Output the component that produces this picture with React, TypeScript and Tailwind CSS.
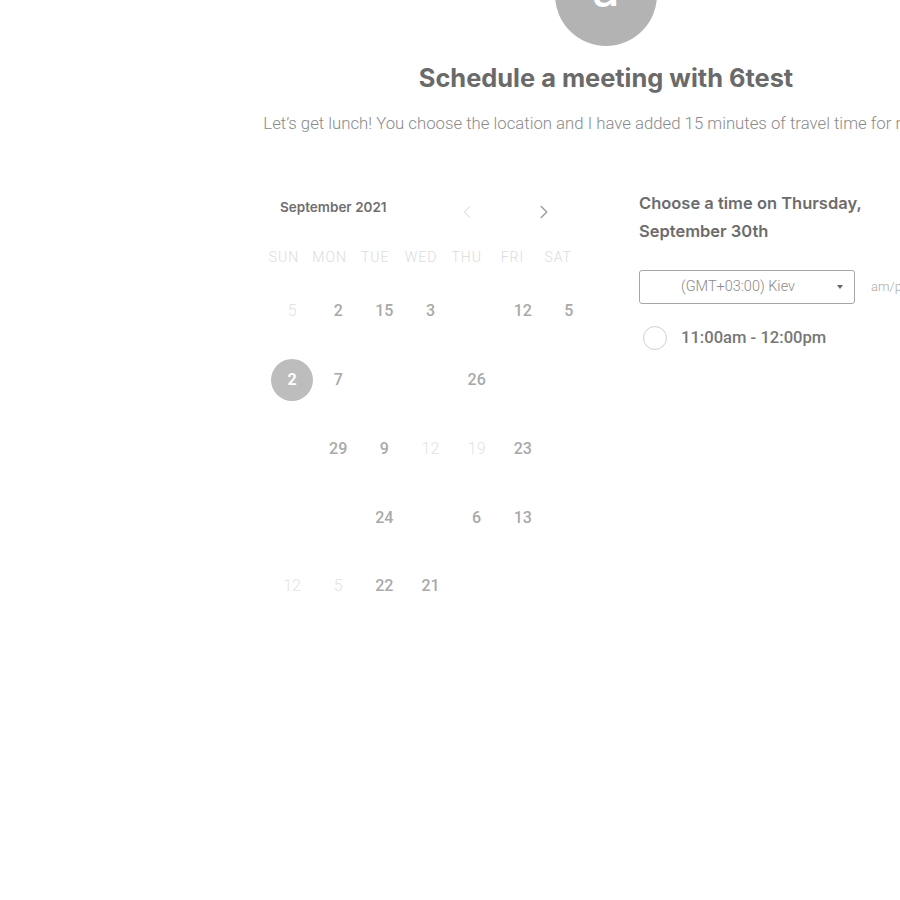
import React from "react";
import {ChevronLeft, ChevronRight} from "lucide-react";

type Day = {label: string; kind: "bold" | "faint" | "empty" | "selected"};

const WEEKDAYS = ["SUN", "MON", "TUE", "WED", "THU", "FRI", "SAT"];

const b = (label: string): Day => ({label, kind: "bold"});
const f = (label: string): Day => ({label, kind: "faint"});
const e: Day = {label: "", kind: "empty"};

const WEEKS: Day[][] = [
  [f("5"), b("2"), b("15"), b("3"), e, b("12"), b("5")],
  [{label: "2", kind: "selected"}, b("7"), e, e, b("26"), e, e],
  [e, b("29"), b("9"), f("12"), f("19"), b("23"), e],
  [e, e, b("24"), e, b("6"), b("13"), e],
  [f("12"), f("5"), b("22"), b("21"), e, e, e],
];

const DayCell = ({day}: {day: Day}) => {
  if (day.kind === "selected") {
    return (
      <div className="flex items-center justify-center">
        <span className="flex h-[42px] w-[42px] items-center justify-center rounded-full bg-[#bdbdbd] text-[16px] font-bold text-white">
          {day.label}
        </span>
      </div>
    );
  }
  return (
    <div
      className={`flex items-center justify-center text-[16px] ${
        day.kind === "faint"
          ? "font-light text-[#e3e3e3]"
          : "font-medium text-[#a9a9a9]"
      }`}>
      {day.label}
    </div>
  );
};

const Calendar = () => {
  return (
    <div className="flex w-[323px] flex-col">
      <div className="flex h-[36px] items-center">
        <span className="pl-[11px] pt-[1px] font-['Inter'] text-[13.5px] font-semibold text-[#6f6f6f]">
          September 2021
        </span>
        <div className="ml-auto flex items-center gap-[55px] pr-[37px] pt-[9px]">
          <ChevronLeft size={22} strokeWidth={1.5} className="text-[#e6e6e6]" />
          <ChevronRight size={22} strokeWidth={1.5} className="text-[#9a9a9a]" />
        </div>
      </div>
      <div className="ml-[-8px] mt-[22px] grid h-[20px] w-[320px] grid-cols-7">
        {WEEKDAYS.map((w) => (
          <div
            key={w}
            className="flex items-center justify-center text-[14px] font-light tracking-[1px] text-[#dcdcdc]">
            {w}
          </div>
        ))}
      </div>
      <div className="mt-[10px] flex flex-col">
        {WEEKS.map((week, i) => (
          <div key={i} className="grid h-[68.75px] grid-cols-7">
            {week.map((day, j) => (
              <DayCell key={j} day={day} />
            ))}
          </div>
        ))}
      </div>
    </div>
  );
};

const TimePicker = () => {
  return (
    <div className="flex w-[304px] flex-col">
      <h2 className="w-[250px] font-['Inter'] text-[16.5px] font-semibold leading-[28px] text-[#6c6c6c]">
        Choose a time on Thursday, September 30th
      </h2>
      <div className="mt-[25px] flex items-center gap-[16px]">
        <div className="flex h-[34px] w-[216px] shrink-0 items-center rounded-[3px] border border-[#a6a6a6] pl-[41px] pr-[11px]">
          <span className="text-[14.5px] font-light text-[#8a8a8a]">
            (GMT+03:00) Kiev
          </span>
          <span className="ml-auto h-0 w-0 border-x-[3px] border-t-[4px] border-x-transparent border-t-[#666]" />
        </div>
        <span className="whitespace-nowrap text-[13px] font-light text-[#ababab]">
          am/pm
        </span>
      </div>
      <div className="mt-[22px] flex items-center gap-[14px] pl-[4px]">
        <span className="h-[24px] w-[24px] rounded-full border border-[#cfcfcf]" />
        <span className="text-[16.6px] font-medium text-[#777]">
          11:00am - 12:00pm
        </span>
      </div>
    </div>
  );
};

const App = () => {
  return (
    <div className="h-[900px] w-full overflow-hidden bg-white font-['Roboto',sans-serif]">
      <div className="flex w-[1212px] flex-col items-center">
        <div className="mt-[-56px] flex h-[102px] w-[102px] items-center justify-center rounded-full bg-[#b3b3b3] pb-[12px]">
          <span className="font-['Inter'] text-[48px] font-medium leading-none text-white">
            a
          </span>
        </div>
        <h1 className="mt-[16px] font-['Inter'] text-[25.4px] font-bold leading-[32px] text-[#6a6a6a]">
          Schedule a meeting with 6test
        </h1>
        <p className="mt-[17px] whitespace-nowrap text-[16.75px] font-light leading-[24px] text-[#8a8a8a]">
          Let’s get lunch! You choose the location and I have added 15 minutes
          of travel time for myself.
        </p>
        <div className="mt-[54px] flex items-start gap-[47px]">
          <Calendar />
          <TimePicker />
        </div>
      </div>
    </div>
  );
};

export default App;
